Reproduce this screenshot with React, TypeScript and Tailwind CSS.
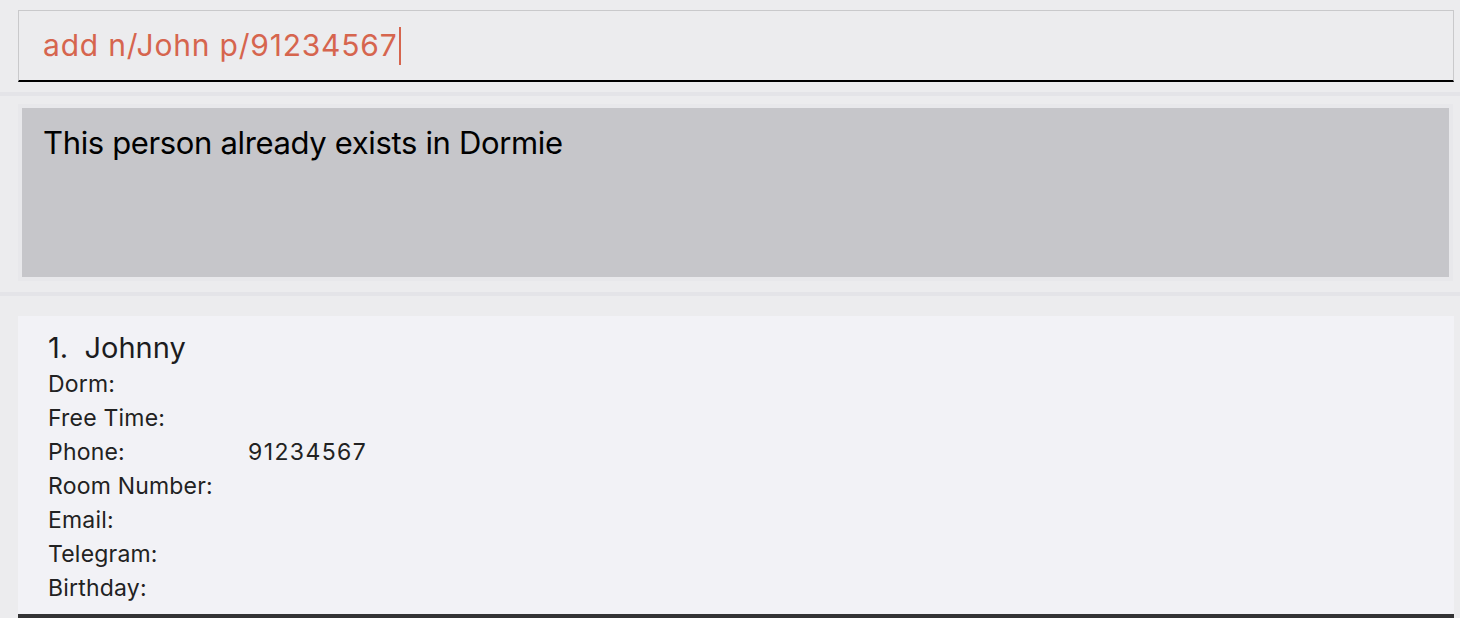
const FIELDS: [string, string][] = [
  ["Dorm:", ""],
  ["Free Time:", ""],
  ["Phone:", "91234567"],
  ["Room Number:", ""],
  ["Email:", ""],
  ["Telegram:", ""],
  ["Birthday:", ""],
];

export default function App() {
  return (
    <div
      className="flex h-[618px] w-[1460px] flex-col overflow-hidden bg-[#ececee]"
      style={{ fontFamily: "Inter, 'Noto Sans', sans-serif" }}
    >
      {/* command box */}
      <div className="pt-[10px] pl-[18px] pr-[6px]">
        <div className="flex h-[72px] items-center border-x border-t border-[#c9c9cb] border-b-2 border-b-black bg-[#ececee] pl-[24px]">
          <span className="text-[30px] tracking-[0.8px] text-[#d6654e]">
            add n/John p/91234567
          </span>
          <span className="ml-px h-[38px] w-[2px] bg-[#d6654e]" />
        </div>
      </div>

      {/* divider */}
      <div className="mt-[10px] h-[4px] bg-[#e4e4e8]" />

      {/* result display */}
      <div className="pt-[8px] pl-[18px] pr-[7px]">
        <div className="border-[4px] border-[#e8e8eb]">
          <div className="h-[169px] bg-[#c6c6ca] px-[21px] pt-[12px]">
            <p className="text-[31px] tracking-[-0.35px] text-black">
              This person already exists in Dormie
            </p>
          </div>
        </div>
      </div>

      {/* divider */}
      <div className="mt-[11px] h-[4px] bg-[#e4e4e8]" />

      {/* person list */}
      <div className="flex flex-1 flex-col pt-[20px] pl-[18px] pr-[6px]">
        <div className="flex-1 bg-[#f2f2f6] pl-[30px] pt-[14px]">
          <p className="text-[29px] leading-[36px] text-[#1c1c1e]">
            1.&nbsp;&nbsp;Johnny
          </p>
          <div className="pt-px">
            {FIELDS.map(([label, value]) => (
              <div key={label} className="flex h-[34px] items-center text-[23px] tracking-[0.2px] text-[#222]">
                <span className="w-[200px]">{label}</span>
                <span className="tracking-[1.4px]">{value}</span>
              </div>
            ))}
          </div>
        </div>
        <div className="h-[4px] bg-[#333335]" />
      </div>
    </div>
  );
}
